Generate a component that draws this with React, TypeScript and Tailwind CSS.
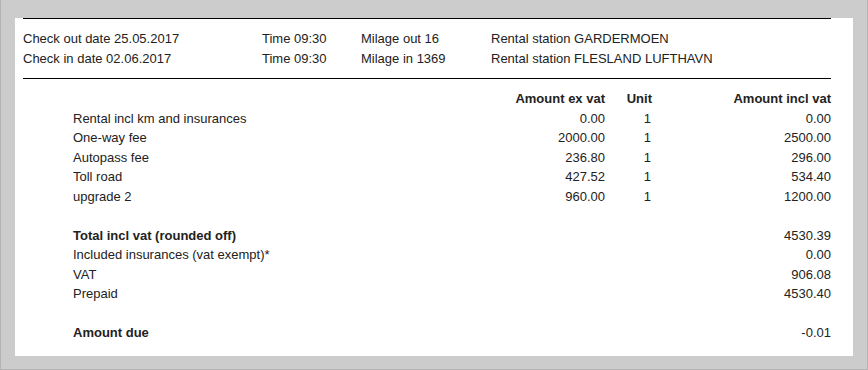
import React from 'react';

type Line = { label: string; exVat?: string; unit?: string; inclVat: string; bold?: boolean };

const ITEMS: Line[] = [
  { label: 'Rental incl km and insurances', exVat: '0.00', unit: '1', inclVat: '0.00' },
  { label: 'One-way fee', exVat: '2000.00', unit: '1', inclVat: '2500.00' },
  { label: 'Autopass fee', exVat: '236.80', unit: '1', inclVat: '296.00' },
  { label: 'Toll road', exVat: '427.52', unit: '1', inclVat: '534.40' },
  { label: 'upgrade 2', exVat: '960.00', unit: '1', inclVat: '1200.00' },
];

const TOTALS: Line[] = [
  { label: 'Total incl vat (rounded off)', inclVat: '4530.39', bold: true },
  { label: 'Included insurances (vat exempt)*', inclVat: '0.00' },
  { label: 'VAT', inclVat: '906.08' },
  { label: 'Prepaid', inclVat: '4530.40' },
];

const Row: React.FC<{ line: Line }> = ({ line }) => (
  <div className="grid grid-cols-[417px_115px_47px_179px] h-[19.5px]">
    <div className={line.bold ? 'font-bold' : ''}>{line.label}</div>
    <div className="text-right">{line.exVat}</div>
    <div className="text-right pr-[1px]">{line.unit}</div>
    <div className="text-right">{line.inclVat}</div>
  </div>
);

const App: React.FC = () => {
  return (
    <div className="w-[868px] h-[370px] bg-[#cccccc] border-x border-b border-[#b4b4b4] pt-[15px] pl-[14px] pr-[14px] pb-[16px] font-['Liberation_Sans',Arial,sans-serif] text-[13px] leading-[19.5px] text-[#222]">
      <div className="h-full bg-white pl-[8px] pr-[22px]">
        {/* rental period */}
        <div className="mt-[3px] border-t border-b border-black pt-[10px] pb-[10px]">
          <div className="grid grid-cols-[239px_99px_130px_1fr] h-[19.5px]">
            <div>Check out date 25.05.2017</div>
            <div>Time 09:30</div>
            <div>Milage out 16</div>
            <div>Rental station GARDERMOEN</div>
          </div>
          <div className="grid grid-cols-[239px_99px_130px_1fr] h-[19.5px]">
            <div>Check in date 02.06.2017</div>
            <div>Time 09:30</div>
            <div>Milage in 1369</div>
            <div>Rental station FLESLAND LUFTHAVN</div>
          </div>
        </div>

        {/* price lines */}
        <div className="pt-[10px] pl-[50px]">
          <div className="grid grid-cols-[417px_115px_47px_179px] h-[19.5px] font-bold">
            <div></div>
            <div className="text-right">Amount ex vat</div>
            <div className="text-right">Unit</div>
            <div className="text-right">Amount incl vat</div>
          </div>
          {ITEMS.map((line) => (
            <Row key={line.label} line={line} />
          ))}
          <div className="h-[19.5px]" />
          {TOTALS.map((line) => (
            <Row key={line.label} line={line} />
          ))}
          <div className="h-[19.5px]" />
          <Row line={{ label: 'Amount due', inclVat: '-0.01', bold: true }} />
        </div>
      </div>
    </div>
  );
};

export default App;
